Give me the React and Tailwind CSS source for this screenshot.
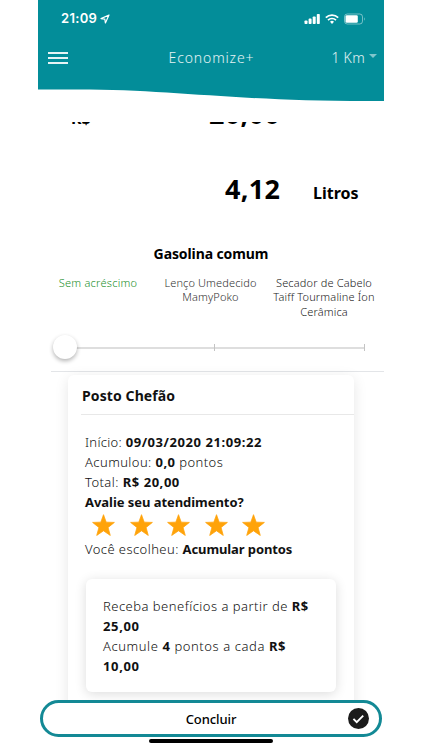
const options = [
  { label: 'Sem acréscimo', className: 'w-[92px] tracking-[0.25px] text-[#238f2b]' },
  { label: 'Lenço Umedecido MamyPoko', className: 'ml-[7px] w-[108px] tracking-[0.12px] text-[#333]' },
  { label: 'Secador de Cabelo Taiff Tourmaline Íon Cerâmica', className: 'w-[108px] tracking-[0.15px] text-[#222]' },
]

function Star() {
  return (
    <svg viewBox="0 0 24 23" className="h-[22px] w-[23px] fill-[#ffa30a] stroke-[#ffa30a]" strokeWidth="0.8" strokeLinejoin="round">
      <path d="M12 .7l2.8 7.8 8.6.3-6.6 5.3 2.3 8.3L12 17.6l-7.1 4.8 2.3-8.3L.6 8.8l8.6-.3z" />
    </svg>
  )
}

function StatusBar() {
  return (
    <div className="flex h-[38px] items-center pl-[23px] pr-[18px] text-white">
      <span className="font-['Inter'] text-[13px] font-semibold tracking-[0.3px]">21:09</span>
      <svg viewBox="0 0 10 10" className="ml-[3px] h-[10px] w-[10px]" fill="none" stroke="currentColor" strokeWidth="1.2" strokeLinejoin="round">
        <path d="M9 1L1 4.6l3.8.6.6 3.8z" />
      </svg>
      <svg viewBox="0 0 62 12" className="ml-auto h-[12px] w-[62px]">
        <g fill="currentColor">
          <rect x="0.5" y="7.5" width="3" height="3.5" rx="0.8" />
          <rect x="4.6" y="5.6" width="3" height="5.4" rx="0.8" />
          <rect x="8.7" y="3.4" width="3" height="7.6" rx="0.8" />
          <rect x="12.8" y="1" width="3" height="10" rx="0.8" />
          <path d="M28 11l-2-2.2a2.9 2.9 0 0 1 4 0z" />
        </g>
        <g fill="none" stroke="currentColor" strokeWidth="1.7">
          <path d="M24 7.1a5.8 5.8 0 0 1 8 0" />
          <path d="M21.8 4.7a9 9 0 0 1 12.4 0" />
        </g>
        <rect x="40.5" y="1" width="18" height="10" rx="2.8" fill="none" stroke="currentColor" strokeOpacity="0.45" />
        <rect x="41.5" y="2.2" width="12.3" height="7.6" rx="1.3" fill="currentColor" />
        <path d="M60.2 4.2q1.6 1.8 0 3.6z" fill="currentColor" opacity="0.5" />
      </svg>
    </div>
  )
}

function Header() {
  return (
    <header className="relative h-[122px] shrink-0">
      <svg viewBox="0 0 346 102" preserveAspectRatio="none" className="absolute inset-x-0 top-0 h-[102px] w-full fill-[#038d99]">
        <path d="M0 0H346V101C200 102 140 89.5 40 89.5H0z" />
      </svg>
      <div className="relative">
        <StatusBar />
        <div className="grid h-[40px] grid-cols-[1fr_auto_1fr] items-center pl-[10px] pr-[7px] text-[14px] font-light text-white/90">
          <div className="flex w-[20px] flex-col gap-[3px]">
            <span className="h-[2px] bg-white/90" />
            <span className="h-[2px] bg-white/90" />
            <span className="h-[2px] bg-white/90" />
          </div>
          <span className="-ml-[2px] -mt-[2px] tracking-[0.85px]">Economize+</span>
          <div className="-mt-[2px] flex items-center justify-end gap-[4px]">
            <span className="tracking-[0.3px]">1 Km</span>
            <span className="mb-[3px] border-x-[4px] border-t-[4px] border-x-transparent border-t-white/50" />
          </div>
        </div>
      </div>
    </header>
  )
}

function Slider() {
  return (
    <div className="ml-[26px] mr-[19px] mt-[14px] flex h-[25px] items-center">
      <div className="relative h-[2px] w-full bg-[#dedede]">
        <span className="absolute -top-[3px] left-[150px] h-[7px] w-px bg-[#c4c4c4]" />
        <span className="absolute -top-[3px] right-0 h-[7px] w-px bg-[#c4c4c4]" />
        <span className="absolute -left-[11.5px] -top-[12px] h-[24px] w-[24px] rounded-full bg-white shadow-[0_2px_4px_rgba(0,0,0,0.3)]" />
      </div>
    </div>
  )
}

function StationCard() {
  return (
    <section className="ml-[30px] mt-[3px] h-[340px] w-[286px] rounded-[6px] bg-white shadow-[0_3px_14px_rgba(0,0,0,0.1)]">
      <h2 className="ml-[13px] h-[40px] border-b border-[#e8e8e8] pl-px text-[14px] font-bold leading-[42px] tracking-[0.1px] text-[#111]">
        Posto Chefão
      </h2>
      <div className="pl-[17px] pt-[17px] text-[13px] font-light leading-[20px] tracking-[0.43px] text-[#111] [&_b]:font-bold">
        <p className="tracking-[0.3px]">Início: <b className="tracking-[0.56px]">09/03/2020 21:09:22</b></p>
        <p>Acumulou: <b>0,0</b> pontos</p>
        <p>Total: <b className="tracking-[0.55px]">R$ 20,00</b></p>
        <p><b className="tracking-[-0.05px]">Avalie seu atendimento?</b></p>
        <div className="ml-[7px] flex h-[27px] items-center gap-[14.5px] pb-[2px]">
          {[1, 2, 3, 4, 5].map((n) => <Star key={n} />)}
        </div>
        <p>Você escolheu: <b className="tracking-[-0.1px]">Acumular pontos</b></p>

        {/* Benefits */}
        <div className="ml-[1px] mt-[20px] h-[113px] w-[250px] rounded-[6px] bg-white pl-[17px] pt-[17px] shadow-[0_2px_12px_rgba(0,0,0,0.14)]">
          <p className="tracking-[0.48px]">Receba benefícios a partir de <b>R$</b></p>
          <p><b className="tracking-[0.65px]">25,00</b></p>
          <p className="tracking-[0.58px]">Acumule <b>4</b> pontos a cada <b>R$</b></p>
          <p><b className="tracking-[0.65px]">10,00</b></p>
        </div>
      </div>
    </section>
  )
}

export default function App() {
  return (
    <div className="h-[750px] w-[422px] overflow-hidden bg-white pl-[38px] font-['Noto_Sans',sans-serif]">
      <div className="flex h-full w-[346px] flex-col whitespace-nowrap">
        <Header />

        <main className="h-[578px] shrink-0 overflow-hidden">
          {/* Amount row, scrolled under the header */}
          <div className="flex h-[10px] items-end overflow-hidden font-bold text-black">
            <span className="mb-[6px] ml-[33px] w-[138px] text-[16px] leading-[16px]">R$</span>
            <span className="mb-[5px] text-[27px] leading-[27px] tracking-[0.3px]">20,00</span>
          </div>

          <div className="mt-[38px] flex h-[38px] items-baseline font-bold text-black">
            <span className="ml-[187px] w-[88px] text-[27px] leading-[38px] tracking-[0.3px]">4,12</span>
            <span className="text-[16px]">Litros</span>
          </div>

          <h1 className="mt-[36px] text-center text-[14px] font-bold leading-[20px] tracking-[-0.1px] text-black">Gasolina comum</h1>

          <div className="ml-[14px] mt-[12px] flex h-[45px] justify-between pr-[6px] text-center text-[11px] font-light leading-[14.3px]">
            {options.map(({ label, className }) => (
              <span key={label} className={`whitespace-normal ${className}`}>{label}</span>
            ))}
          </div>

          <Slider />
          <div className="ml-[13px] mt-[11px] h-px bg-[#e3e5e8]" />
          <StationCard />
        </main>

        <button className="relative ml-[2px] flex h-[37px] w-[342px] shrink-0 items-center justify-center rounded-full border-[3px] border-[#138995] bg-white pt-[2px] text-[13px] font-medium tracking-[-0.1px] text-black">
          Concluir
          <svg viewBox="0 0 20 20" className="absolute right-[10px] top-[5px] h-[21px] w-[21px]">
            <circle cx="10" cy="10" r="10" fill="#1b1b1b" />
            <path d="M5.2 10.3l3.1 3.1 6.2-6.1" fill="none" stroke="#fff" strokeWidth="1.8" />
          </svg>
        </button>
        <div className="ml-[111px] mt-[2px] h-[4px] w-[124px] rounded-full bg-black" />
      </div>
    </div>
  )
}
